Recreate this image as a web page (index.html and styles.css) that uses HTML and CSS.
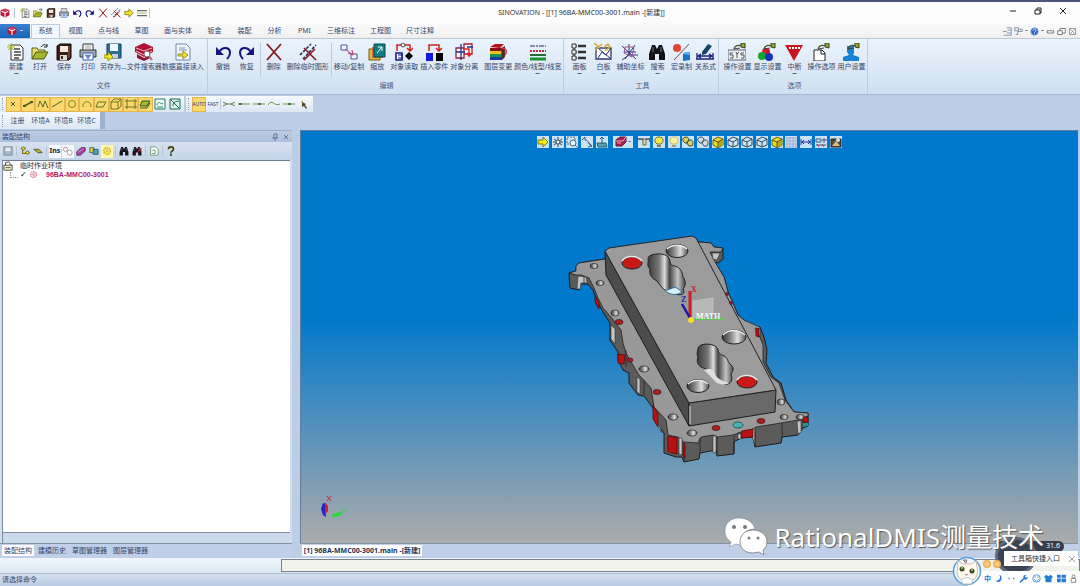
FILE: index.html
```html
<!DOCTYPE html>
<html lang="zh-CN">
<head>
    <meta charset="UTF-8">
    <meta name="viewport" content="width=device-width, initial-scale=1.0">
    <title>SINOVATION</title>
    <link rel="stylesheet" href="styles.css">
</head>
<body>
    <!-- Icon sprite -->
    <svg class="sprite" aria-hidden="true">
        <symbol id="cube" viewBox="0 0 18 18"><path d="M1 4l8-3 8 3v9l-8 4-8-4z" fill="#b51539"/><path d="M3 6l6 3 6-3M9 9v7" stroke="#fff" stroke-width="2" fill="none"/><path d="M3 4l6-2 6 2-6 3z" fill="#dc4260"/></symbol>
        <symbol id="new" viewBox="0 0 18 18"><path d="M4 2h9l3 3v12H4z" fill="#fff" stroke="#333"/><path d="M7 6h6M7 9h7M7 12h7M7 15h5" stroke="#444" stroke-width="1.3"/><path d="M4 0v8M0 4h8M1 1l6 6M7 1L1 7" stroke="#a5b82c"/></symbol>
        <symbol id="open" viewBox="0 0 18 18"><path d="M1 16V5h5l1 2h7v3" fill="#e6dc68" stroke="#5c6512"/><path d="M1 16l4-7h12l-4 7z" fill="#a5b52d" stroke="#4f5910"/><path d="M10 4c2-3 4-3 6-1m0-2v3h-3" stroke="#222" fill="none"/></symbol>
        <symbol id="save" viewBox="0 0 18 18"><path d="M2 3l3-2h11v14l-2 2H2z" fill="#3a1d13" stroke="#170a06"/><path d="M5 3h8v6H5z" fill="#f3e9df"/><path d="M5 12h7v5H5z" fill="#ddd"/><path d="M6 13h2v3H6z" fill="#3a1d13"/><path d="M14 3v12" stroke="#a6694a"/></symbol>
        <symbol id="print" viewBox="0 0 18 18"><path d="M4 7V1h10v6" fill="#fff" stroke="#333"/><path d="M1 7h16v7H1z" fill="#a8acb4" stroke="#333"/><path d="M4 10h10v7H4z" fill="#fff" stroke="#2b5fc4"/><path d="M6 12h6l-3 4zM6 3h6M6 5h6" fill="#5b91e8" stroke="#777" stroke-width=".7"/></symbol>
        <symbol id="saveas" viewBox="0 0 18 18"><path d="M3 1h14v14H3z" fill="#277294" stroke="#123f59"/><path d="M6 1h8v7H6z" fill="#f4fbff"/><path d="M8 11h6v4H8z" fill="#ccd"/><path d="M0 12h4V9l5 5-5 4v-3H0z" fill="#f2e61c" stroke="#837c0c" stroke-width=".7"/></symbol>
        <symbol id="search-file" viewBox="0 0 18 18"><path d="M0 4l9-4 9 4v5l-9 5-9-5z" fill="#b31235"/><path d="M1 5l8 3 8-3M1 8l8 4 8-4" stroke="#f6b8c3" fill="none"/><path d="M2 11l7 4 6-3v3l-6 3-7-3z" fill="#8f1230"/><circle cx="12" cy="11" r="3" fill="#fff" stroke="#666"/><path d="M14 13l3 4" stroke="#b66" stroke-width="2"/></symbol>
        <symbol id="import" viewBox="0 0 18 18"><path d="M2 1h10l4 4v12H2z" fill="#f3f6fc" stroke="#6f87ae"/><path d="M5 5h6M5 7h8" stroke="#7993bd"/><path d="M4 11h5V8l5 4-5 4v-3H4z" fill="#f2e539" stroke="#98901c"/></symbol>
        <symbol id="undo" viewBox="0 0 18 18"><path d="M2 4v8h8z" fill="#15157e"/><path d="M5 9c4-6 11-5 11 1 0 2-1 4-3 6" stroke="#15157e" stroke-width="2" fill="none"/></symbol>
        <symbol id="redo" viewBox="0 0 18 18"><path d="M16 4v8H8z" fill="#15157e"/><path d="M13 9C9 3 2 4 2 10c0 2 1 4 3 6" stroke="#15157e" stroke-width="2" fill="none"/></symbol>
        <symbol id="delete" viewBox="0 0 18 18"><path d="M2 1l14 16M16 1L2 17" stroke="#861520" stroke-width="1.8"/></symbol>
        <symbol id="delete-temp" viewBox="0 0 18 18"><path d="M1 12L12 1M4 16L17 2" stroke="#222c59" stroke-width="1.6" stroke-dasharray="3 1.5"/><path d="M5 5l12 12M16 6L5 17" stroke="#8d1822" stroke-width="1.6"/></symbol>
        <symbol id="move" viewBox="0 0 18 18"><path d="M1 2h6v5H1zM11 11h6v5h-6z" fill="#f4f6ff" stroke="#4b558e"/><path d="M5 6l8 6M8 10l5 2-1-5" stroke="#c13a67" fill="none"/></symbol>
        <symbol id="scale" viewBox="0 0 18 18"><path d="M1 6h11v11H1z" fill="#e4b93a" stroke="#795713"/><path d="M4 4h11v11H4z" fill="#d36b2f"/><path d="M6 1h11v13H6z" fill="#137d86" stroke="#064950"/><path d="M9 10l5-6m-4 0h4v4" stroke="#fff" fill="none"/></symbol>
        <symbol id="read" viewBox="0 0 18 18"><path d="M2 8V2h13v6m-3-3l3 3 3-3" stroke="#cf2020" stroke-width="1.5" fill="none"/><path d="M1 10h6v7H1z" fill="#fff" stroke="#11157a" stroke-width="1.5"/><path d="M3 12h5M3 15h5" stroke="#11157a"/><path d="M14 9l4 4-4 4-4-4z"/><circle cx="8" cy="2" r="2" fill="#f7f7f7" stroke="#444"/></symbol>
        <symbol id="insert" viewBox="0 0 18 18"><path d="M4 8V2h10v6m-3-3l3 3 3-3" stroke="#cf2020" stroke-width="1.5" fill="none"/><path d="M1 10h7v8H1z" fill="#1515e2"/><path d="M11 10h7v8h-7z"/></symbol>
        <symbol id="split" viewBox="0 0 18 18"><path d="M1 5h8v10H1zM9 1h8v10H9z" fill="#fff" stroke="#9a1f35" stroke-width="1.3"/><path d="M1 9h9M6 1v16M12 4h6" stroke="#202d91" stroke-width="1.3"/><path d="M8 6h6v6m-2-2l2 3 3-3" stroke="#d22" fill="none" stroke-width="1.5"/></symbol>
        <symbol id="layers" viewBox="0 0 18 18"><path d="M1 4l5-3h9l-4 4z" fill="#b51515"/><path d="M1 5h11v3H1z" fill="#861014"/><path d="M1 8h12v3H1z" fill="#edc320"/><path d="M1 11h12v3H1z" fill="#15934b"/><path d="M1 14h12v3H1z" fill="#1739aa"/><path d="M12 5l4-2v11l-3 3" fill="#4b2c22"/><path d="M13 5c5 0 5 4 3 7" stroke="#d33e4b" fill="none" stroke-width="1.5"/></symbol>
        <symbol id="linestyle" viewBox="0 0 18 18"><path d="M1 3h16" stroke="#28285a" stroke-dasharray="5 1 2 1"/><path d="M1 8h16" stroke="#c62842" stroke-width="2" stroke-dasharray="2 1"/><path d="M1 12h16" stroke="#276e36" stroke-width="2"/><path d="M1 16h16" stroke="#17942e" stroke-width="3"/></symbol>
        <symbol id="panel" viewBox="0 0 18 18"><path d="M4 1v15M4 3h3M4 9h3M4 15h3" stroke="#222" fill="none"/><path d="M2 1h4v4H2zM2 7h4v4H2zM2 13h4v4H2z" fill="#eee" stroke="#333"/><path d="M8 3h8M8 9h8M8 15h8" stroke="#333" stroke-width="2.5"/></symbol>
        <symbol id="board" viewBox="0 0 18 18"><path d="M2 5h15v11H2z" fill="#fff" stroke="#303670" stroke-width="1.3"/><path d="M4 15l4-6 4 3 5-7M5 6l11 9" stroke="#222c72" fill="none"/><path d="M0 0l6 5m2-4L1 7M9 5l5-4 2 3-5 4" stroke="#d7ab35" stroke-width="1.6" fill="none"/></symbol>
        <symbol id="axis" viewBox="0 0 18 18"><path d="M8 1v11h9M8 12l-7 5M1 3l14 13M3 9h12M14 2L4 16" stroke="#31347b" fill="none"/><path d="M4 4l9 0-2 10-8-4z" stroke="#a15191" fill="none"/></symbol>
        <symbol id="binoculars" viewBox="0 0 18 18"><path d="M4 2h3l2 4 2-4h3l3 9v6h-6v-6H7v6H1v-6z" fill="#121217"/><path d="M5 4v5m8-5v5" stroke="#72809a"/></symbol>
        <symbol id="macro" viewBox="0 0 18 18"><circle cx="5" cy="5" r="4" fill="#e04532"/><path d="M2 17L17 1" stroke="#82464c"/><path d="M11 11h7v6l-7 1z" fill="#1572c8"/><path d="M11 11l2-2h5v3" fill="#56b0ed"/></symbol>
        <symbol id="relation" viewBox="0 0 18 18"><path d="M1 16V10m16 6v-6M0 16h18M2 13h14m-11-2l-3 2 3 2m8-4l3 2-3 2" stroke="#18207b" fill="none" stroke-width="1.3"/><path d="M6 9l6-8 4 2-6 8-4 1z" fill="#174669"/></symbol>
        <symbol id="hand" viewBox="0 0 18 18"><path d="M6 6c1-4 4-4 9-3" fill="none" stroke="#4b4e28" stroke-width="1.3"/><path d="M13 0h4v5l-4-1z" fill="#96a53a" stroke="#38401f"/><path d="M6 6l6-1" stroke="#444"/></symbol>
        <symbol id="sys" viewBox="0 0 18 18"><path d="M0 7h18v10H0z" fill="#edf0f7" stroke="#59617a"/><path d="M5 10H2v2h3v3H2M8 9l1 2 2-2m-2 2v4m7-5h-3v2h3v3h-3" stroke="#555" fill="none"/><use href="#hand"/></symbol>
        <symbol id="rgb" viewBox="0 0 18 18"><circle cx="8" cy="9" r="4" fill="#db1623"/><circle cx="4" cy="13" r="4" fill="#16a52e"/><circle cx="11" cy="14" r="4" fill="#1631c5"/><use href="#hand"/></symbol>
        <symbol id="stop" viewBox="0 0 18 18"><path d="M0 2h18L9 18z" fill="#c7141e"/><path d="M4 5h2m1 0h2m1 0h2m1 0h2" stroke="#fff" stroke-width="2"/></symbol>
        <symbol id="page" viewBox="0 0 18 18"><path d="M2 7h8l3 3v8H2z" fill="#fff" stroke="#222"/><path d="M9 7v4h4" fill="none" stroke="#222"/><use href="#hand"/></symbol>
        <symbol id="user" viewBox="0 0 18 18"><path d="M5 3h7v7l-1 2 6 2v4H1v-4l6-2-2-3z" fill="#1883d4"/><use href="#hand"/></symbol>
        <symbol id="arrow" viewBox="0 0 12 12"><path d="M1 4h5V1l5 5-5 5V8H1z" fill="#f3e819" stroke="#837b15"/></symbol>
        <symbol id="lines" viewBox="0 0 12 12"><path d="M0 3h12M0 9h12" stroke="#687066" stroke-width="1.5"/><path d="M0 6h12" stroke="#9cac57"/></symbol>

        <symbol id="s-point" viewBox="0 0 12 12"><path d="M4 4l4 4m0-4L4 8" stroke="#5c501c"/></symbol>
        <symbol id="s-end" viewBox="0 0 12 12"><path d="M2 8l8-4" stroke="#465d1b" stroke-width="1.5"/><path d="M1 7h3v2H1zM8 3h3v2H8z" fill="#465d1b"/></symbol>
        <symbol id="s-poly" viewBox="0 0 12 12"><path d="M1 9l2-6 3 6 2-6 3 7" fill="none" stroke="#58692b"/></symbol>
        <symbol id="s-line" viewBox="0 0 12 12"><path d="M1 9l10-6" stroke="#486122"/></symbol>
        <symbol id="s-circle" viewBox="0 0 12 12"><circle cx="6" cy="6" r="3.5" fill="none" stroke="#818226"/></symbol>
        <symbol id="s-arc" viewBox="0 0 12 12"><path d="M2 9C1 2 11 2 10 9" fill="none" stroke="#847d2a"/></symbol>
        <symbol id="s-plane" viewBox="0 0 12 12"><path d="M3 4h8L8 9H1z" fill="none" stroke="#5e772c"/></symbol>
        <symbol id="s-box" viewBox="0 0 12 12"><path d="M1 4h7v7H1zM1 4l3-3h7v7l-3 3m0-7l3-3" fill="none" stroke="#6b7527"/></symbol>
        <symbol id="s-frame" viewBox="0 0 12 12"><path d="M2 1v10m8-10v10M0 3h12M0 9h12" fill="none" stroke="#6f7029"/></symbol>
        <symbol id="s-solid" viewBox="0 0 12 12"><path d="M3 3h8L8 8H1z" fill="#9cba32" stroke="#375a1f"/><path d="M1 10h7l3-5" fill="none" stroke="#375a1f"/></symbol>
        <symbol id="s-wave" viewBox="0 0 12 12"><path d="M1 1h10v10H1z" fill="#eefbf6" stroke="#1c7960"/><path d="M3 7c2-6 4 1 6-2M3 9h6" stroke="#238367" fill="none"/></symbol>
        <symbol id="s-cross" viewBox="0 0 12 12"><path d="M1 1h10v10H1z" fill="#ddf2e9" stroke="#1c6552"/><path d="M2 2l8 8M4 8c0-5 3-4 6-5" stroke="#1c6552" fill="none"/></symbol>
        <symbol id="s-trim" viewBox="0 0 12 12"><path d="M0 4l4 2-4 2M12 4L8 6l4 2M3 6h6" stroke="#66794b" fill="none"/></symbol>
        <symbol id="s-seg" viewBox="0 0 12 12"><path d="M0 6h12" stroke="#6e9c42"/><path d="M1 5h3v2H1z" fill="#576f44"/></symbol>
        <symbol id="s-mid" viewBox="0 0 12 12"><path d="M0 6h12" stroke="#6e9c42"/><path d="M5 5h3v2H5z" fill="#576f44"/></symbol>
        <symbol id="s-curve" viewBox="0 0 12 12"><path d="M0 7c4-7 6 2 12-1" stroke="#6e8e4e" fill="none"/></symbol>
        <symbol id="s-pick" viewBox="0 0 12 12"><path d="M4 4l4 2-1 1 2 3-1 1-2-3-2 1z" fill="#53471f"/><path d="M3 4l2-1" stroke="#b7ad3b"/></symbol>

        <symbol id="p-save" viewBox="0 0 12 12"><path d="M1 1h10v10H1z" fill="#aeb7c6" stroke="#76839a"/><path d="M3 2h6v4H3z" fill="#e7ebf2"/></symbol>
        <symbol id="p-tree" viewBox="0 0 12 12"><path d="M1 3l3-2 3 2-3 2zM6 8l3-2 3 2-3 2zM3 5v4h4" fill="#edd822" stroke="#5b5418"/></symbol>
        <symbol id="p-minus" viewBox="0 0 12 12"><path d="M1 4h6l4 4H6z" fill="#c0b932" stroke="#4b4e25"/></symbol>
        <symbol id="p-parts" viewBox="0 0 12 12"><circle cx="3" cy="4" r="2.5" fill="#fff" stroke="#a48e91"/><circle cx="8" cy="8" r="3" fill="#fff" stroke="#a48e91"/></symbol>
        <symbol id="p-brick" viewBox="0 0 12 12"><path d="M1 7l5-5h5v4l-6 5H1z" fill="#a646a1" stroke="#562469"/><path d="M2 8l7-5" stroke="#e09ad9"/></symbol>
        <symbol id="p-copy" viewBox="0 0 12 12"><path d="M1 2h5v6H1z" fill="#e5d734" stroke="#356"/><path d="M5 4h6v6H5z" fill="#49a3ad" stroke="#245562"/></symbol>
        <symbol id="p-gear" viewBox="0 0 12 12"><circle cx="6" cy="6" r="4" fill="none" stroke="currentColor" stroke-width="2" stroke-dasharray="2 1"/><path d="M6 2v8M2 6h8M3 3l6 6M9 3L3 9" stroke="currentColor" fill="none" stroke-width=".7"/></symbol>
        <symbol id="p-refresh" viewBox="0 0 12 12"><path d="M2 1h6l3 3v7H2z" fill="#f7fff8" stroke="#65886b"/><path d="M4 6c2-3 5 0 3 3H4" stroke="#278943" fill="none"/></symbol>
        <symbol id="p-help" viewBox="0 0 12 12"><path d="M3 4c0-4 6-4 6 0 0 2-3 2-3 4m0 1v3" stroke="#3c3f1b" stroke-width="2" fill="none"/><path d="M4 4c0-2 4-2 4 0" stroke="#bbbd31" fill="none"/></symbol>
        <symbol id="p-next" viewBox="0 0 18 18"><use href="#binoculars"/><path d="M8 13l8-8m-5 0h5v5" stroke="#9c2338" stroke-width="2" fill="none"/></symbol>

        <symbol id="v-rotate" viewBox="0 0 12 12"><path d="M6 1v10M1 6h10M2 3l8 6M10 3L2 9" stroke="#33465a" fill="none"/><circle cx="6" cy="6" r="2" fill="#fff" stroke="#35495c"/></symbol>
        <symbol id="v-zoom" viewBox="0 0 12 12"><path d="M1 1h8v7H1z" fill="none" stroke="#536e86" stroke-dasharray="2 1"/><circle cx="7" cy="7" r="3" fill="#e6f5ff" stroke="#486a85"/><path d="M9 9l3 3" stroke="#486a85"/></symbol>
        <symbol id="v-turn" viewBox="0 0 12 12"><path d="M1 4l3-3v3c4 0 3 5 7 6M7 6l4 4-4 1" stroke="#34546d" fill="none"/></symbol>
        <symbol id="v-normal" viewBox="0 0 12 12"><path d="M1 7h9l1 4H2z" fill="#53a6b1" stroke="#265e70"/><path d="M6 1v7M4 3l2-2 2 2" stroke="#265e70" fill="none"/></symbol>
        <symbol id="v-section" viewBox="0 0 12 12"><path d="M1 4l4-3h6v5l-4 4H1z" fill="#a9234f" stroke="#5f173a"/><path d="M1 5h7l3-4M2 7h4" stroke="#ecacc1" fill="none"/></symbol>
        <symbol id="v-hide" viewBox="0 0 12 12"><path d="M0 3h4l2 2M8 3h4v3" stroke="#494b55" stroke-width="1.5" fill="none"/><path d="M5 3h3v6H5z" fill="#e5ddb4" stroke="#66613a"/></symbol>
        <symbol id="v-bulb" viewBox="0 0 12 12"><path d="M4 8C1 6 1 1 6 1s5 5 2 7z" fill="#f7e84e" stroke="#756d22"/><path d="M4 9h4v2H4z" fill="#847f59"/></symbol>
        <symbol id="v-dim" viewBox="0 0 12 12"><path d="M4 8C1 6 1 1 6 1s5 5 2 7z" fill="#f9f1a3" stroke="#c9bd62"/><path d="M4 9h4v2H4z" fill="#a3a082"/></symbol>
        <symbol id="v-pair" viewBox="0 0 12 12"><path d="M3 7C-1 4 1 1 4 1s4 3 1 6zM7 10C4 7 5 4 8 4s4 3 2 6z" fill="#d8cf64" stroke="#414b38"/></symbol>
        <symbol id="v-pair2" viewBox="0 0 12 12"><path d="M3 7C-1 4 1 1 4 1s4 3 1 6zM7 10C4 7 5 4 8 4s4 3 2 6z" fill="#d5dde4" stroke="#40505d"/></symbol>
        <symbol id="v-shade" viewBox="0 0 12 12"><path d="M1 4l5-3 5 2v6l-5 3-5-3z" fill="#edda24" stroke="#6b641b"/><path d="M6 6l5-3v6l-5 3z" fill="#b5a816"/><path d="M1 4l5 2v6m0-6l5-3" stroke="#5b5518" fill="none"/></symbol>
        <symbol id="v-wire" viewBox="0 0 12 12"><path d="M1 4l5-3 5 2v6l-5 2-5-2zM1 4l5 2v5m0-5l5-3" stroke="#334b5d" fill="none"/></symbol>
        <symbol id="v-grid" viewBox="0 0 12 12"><path d="M1 2h10M1 5h10M1 8h10M1 11h10M2 1v10M5 1v10M8 1v10M11 1v10" stroke="#9992bd" stroke-width=".7"/></symbol>
        <symbol id="v-measure" viewBox="0 0 12 12"><path d="M1 3v6m10-6v6M1 6h10M4 4L2 6l2 2m4-4l2 2-2 2" stroke="#273098" fill="none"/></symbol>
        <symbol id="v-tag" viewBox="0 0 12 12"><path d="M1 3h5v3H1zM1 9h10M9 2v5M7 4h5" stroke="#4b527f" fill="none"/><path d="M2 8l2 3m3-3l2 3" stroke="#b93b53"/></symbol>
        <symbol id="v-photo" viewBox="0 0 12 12"><path d="M1 3h10v8H1z" fill="#564b40" stroke="#252424"/><path d="M2 10l4-5 4 5z" fill="#dfbf7e"/><circle cx="8" cy="4" r="2" fill="#ddd"/></symbol>
    </svg>

    <!-- Title bar -->
    <header class="title-bar">
        <div class="quick-access">
            <svg class="icon-small"><use href="#cube"/></svg>
            <span class="divider"></span>
            <button aria-label="新建"><svg class="icon-small"><use href="#new"/></svg></button>
            <button aria-label="打开"><svg class="icon-small"><use href="#open"/></svg></button>
            <button aria-label="保存"><svg class="icon-small"><use href="#save"/></svg></button>
            <button aria-label="打印"><svg class="icon-small"><use href="#print"/></svg></button>
            <button aria-label="撤销"><svg class="icon-small"><use href="#undo"/></svg></button>
            <button aria-label="恢复"><svg class="icon-small"><use href="#redo"/></svg></button>
            <button aria-label="删除"><svg class="icon-small"><use href="#delete"/></svg></button>
            <button aria-label="删除临时图形"><svg class="icon-small"><use href="#delete-temp"/></svg></button>
            <button aria-label="执行"><svg class="icon-small"><use href="#arrow"/></svg></button>
            <button aria-label="线型"><svg class="icon-small"><use href="#lines"/></svg></button>
            <span class="divider"></span>
        </div>
        <h1>SINOVATION - [[1] 96BA-MMC00-3001.main -[新建]]</h1>
        <div class="window-buttons">
            <button aria-label="最小化"><svg class="icon-win" viewBox="0 0 8 8"><path d="M1 4h6" stroke="#222"/></svg></button>
            <button aria-label="还原"><svg class="icon-win" viewBox="0 0 8 8"><path d="M1 3h5v4H1zM3 3V1h4v5H6" fill="none" stroke="#222"/></svg></button>
            <button aria-label="关闭"><svg class="icon-win" viewBox="0 0 8 8"><path d="M1 1l6 6M7 1L1 7" stroke="#222"/></svg></button>
        </div>
    </header>

    <!-- Ribbon tabs -->
    <nav class="ribbon-tabs">
        <button class="app-button" aria-label="应用菜单"><svg class="icon-small"><use href="#cube"/></svg><span class="caret light"></span></button>
        <a class="tab active" href="#">系统</a>
        <a class="tab" href="#">视图</a>
        <a class="tab" href="#">点与线</a>
        <a class="tab" href="#">草图</a>
        <a class="tab" href="#">面与实体</a>
        <a class="tab" href="#">钣金</a>
        <a class="tab" href="#">装配</a>
        <a class="tab" href="#">分析</a>
        <a class="tab" href="#">PMI</a>
        <a class="tab" href="#">三维标注</a>
        <a class="tab" href="#">工程图</a>
        <a class="tab" href="#">尺寸注释</a>
        <div class="tab-tools">
            <button aria-label="对齐"><svg class="icon-tab" viewBox="0 0 12 12"><path d="M0 6h5M5 1h6v3H6m5 0v4H5m6 0v3H1" fill="none" stroke="#6485a5"/></svg></button>
            <button aria-label="窗口"><svg class="icon-tab" viewBox="0 0 12 12"><path d="M1 1h5v4H1zM7 3h4v3H5v4H2" fill="none" stroke="#667583"/></svg><span class="caret"></span></button>
            <button aria-label="帮助"><svg class="icon-tab" viewBox="0 0 12 12"><circle cx="6" cy="6" r="5" fill="#2c65c5" stroke="#8db1e6"/><path d="M4 5c0-3 4-3 4 0L6 7v2" stroke="#fff" fill="none"/></svg><span class="caret"></span></button>
            <button aria-label="最小化文档"><svg class="icon-tab" viewBox="0 0 12 12"><path d="M2 5h8v3H2z" fill="#fff" stroke="#555"/></svg></button>
            <button aria-label="还原文档"><svg class="icon-tab" viewBox="0 0 12 12"><path d="M1 5h6v5H1zM4 5V2h7v6H7" fill="#fff" stroke="#555"/></svg></button>
            <button aria-label="关闭文档"><svg class="icon-tab" viewBox="0 0 12 12"><path d="M2 2h8v8H2zM3 3l6 6m0-6L3 9" fill="#fff" stroke="#777"/></svg></button>
        </div>
    </nav>

    <!-- Ribbon -->
    <section class="ribbon">
        <div class="ribbon-group file-group">
            <div class="ribbon-items">
                <button class="tool drop"><svg><use href="#new"/></svg>新建</button>
                <button class="tool"><svg><use href="#open"/></svg>打开</button>
                <button class="tool"><svg><use href="#save"/></svg>保存</button>
                <button class="tool"><svg><use href="#print"/></svg>打印</button>
                <button class="tool"><svg><use href="#saveas"/></svg>另存为...</button>
                <button class="tool"><svg><use href="#search-file"/></svg>文件搜索器</button>
                <button class="tool"><svg><use href="#import"/></svg>数据直接读入</button>
            </div>
            <h2>文件</h2>
        </div>
        <div class="ribbon-group">
            <div class="ribbon-items">
                <button class="tool"><svg><use href="#undo"/></svg>撤销</button>
                <button class="tool"><svg><use href="#redo"/></svg>恢复</button>
                <span class="ribbon-line"></span>
                <button class="tool"><svg><use href="#delete"/></svg>删除</button>
                <button class="tool"><svg><use href="#delete-temp"/></svg>删除临时图形</button>
                <span class="ribbon-line"></span>
                <button class="tool"><svg><use href="#move"/></svg>移动/复制</button>
                <button class="tool"><svg><use href="#scale"/></svg>缩放</button>
                <button class="tool"><svg><use href="#read"/></svg>对象读取</button>
                <button class="tool"><svg><use href="#insert"/></svg>插入零件</button>
                <button class="tool"><svg><use href="#split"/></svg>对象分离</button>
                <span class="ribbon-gap"></span>
                <button class="tool"><svg><use href="#layers"/></svg>图层变更</button>
                <button class="tool drop"><svg><use href="#linestyle"/></svg>颜色/线型/线宽</button>
            </div>
            <h2>编辑</h2>
        </div>
        <div class="ribbon-group">
            <div class="ribbon-items">
                <button class="tool drop"><svg><use href="#panel"/></svg>面板</button>
                <button class="tool drop"><svg><use href="#board"/></svg>白板</button>
                <button class="tool"><svg><use href="#axis"/></svg>辅助坐标</button>
                <button class="tool drop"><svg><use href="#binoculars"/></svg>搜索</button>
                <button class="tool"><svg><use href="#macro"/></svg>宏录制</button>
                <button class="tool"><svg><use href="#relation"/></svg>关系式</button>
            </div>
            <h2>工具</h2>
        </div>
        <div class="ribbon-group">
            <div class="ribbon-items">
                <button class="tool drop"><svg><use href="#sys"/></svg>操作设置</button>
                <button class="tool drop"><svg><use href="#rgb"/></svg>显示设置</button>
                <button class="tool drop"><svg><use href="#stop"/></svg>中断</button>
                <button class="tool"><svg><use href="#page"/></svg>操作选项</button>
                <button class="tool"><svg><use href="#user"/></svg>用户设置</button>
            </div>
            <h2>选项</h2>
        </div>
    </section>

    <!-- Selection toolbars -->
    <section class="toolbars">
        <div class="toolbar-row">
            <div class="toolbar">
                <span class="grip"></span>
                <div class="snap-buttons">
                    <button class="on" aria-label="点"><svg><use href="#s-point"/></svg></button>
                    <button class="on" aria-label="端点"><svg><use href="#s-end"/></svg></button>
                    <button class="on" aria-label="曲线"><svg><use href="#s-poly"/></svg></button>
                    <button class="on" aria-label="直线"><svg><use href="#s-line"/></svg></button>
                    <button class="on" aria-label="圆"><svg><use href="#s-circle"/></svg></button>
                    <button class="on" aria-label="圆弧"><svg><use href="#s-arc"/></svg></button>
                    <button class="on" aria-label="平面"><svg><use href="#s-plane"/></svg></button>
                    <button class="on" aria-label="实体"><svg><use href="#s-box"/></svg></button>
                    <button class="on" aria-label="尺寸"><svg><use href="#s-frame"/></svg></button>
                    <button class="on" aria-label="面"><svg><use href="#s-solid"/></svg></button>
                    <button aria-label="全部选择"><svg><use href="#s-wave"/></svg></button>
                    <button aria-label="全部取消"><svg><use href="#s-cross"/></svg></button>
                </div>
            </div>
            <div class="toolbar">
                <span class="grip"></span>
                <button class="mode on">AUTO</button>
                <button class="mode">FAST</button>
                <span class="divider"></span>
                <div class="curve-buttons">
                    <button aria-label="交点"><svg><use href="#s-trim"/></svg></button>
                    <button aria-label="起点"><svg><use href="#s-seg"/></svg></button>
                    <button aria-label="中点"><svg><use href="#s-mid"/></svg></button>
                    <button aria-label="曲线上点"><svg><use href="#s-curve"/></svg></button>
                    <button aria-label="线上点"><svg><use href="#s-mid"/></svg></button>
                    <button aria-label="拾取"><svg><use href="#s-pick"/></svg></button>
                </div>
            </div>
        </div>
        <div class="toolbar-row">
            <div class="toolbar env">
                <span class="grip"></span>
                <button>注册</button>
                <button>环境A</button>
                <button>环境B</button>
                <button>环境C</button>
                <span class="env-end"></span>
            </div>
        </div>
    </section>

    <!-- Work area -->
    <main class="workspace">
        <aside class="side-panel">
            <div class="panel-header">
                <h2>装配结构</h2>
                <svg class="icon-win" viewBox="0 0 8 8"><path d="M3 1h3v4H3zM1 5h6M4 5v3" fill="none" stroke="#667b9a"/></svg>
                <svg class="icon-win" viewBox="0 0 8 8"><path d="M2 2l4 4m0-4L2 6" stroke="#667b9a"/></svg>
            </div>
            <div class="panel-tools">
                <button aria-label="保存"><svg><use href="#p-save"/></svg></button>
                <span class="divider"></span>
                <button aria-label="展开"><svg><use href="#p-tree"/></svg></button>
                <button aria-label="折叠"><svg><use href="#p-minus"/></svg></button>
                <span class="divider"></span>
                <button class="pressed">Ins</button>
                <button class="pressed" aria-label="零件"><svg><use href="#p-parts"/></svg></button>
                <button aria-label="实体"><svg><use href="#p-brick"/></svg></button>
                <button aria-label="复制"><svg><use href="#p-copy"/></svg></button>
                <button class="pressed yellow" aria-label="约束"><svg><use href="#p-gear"/></svg></button>
                <span class="divider"></span>
                <button aria-label="查找"><svg><use href="#binoculars"/></svg></button>
                <button aria-label="查找下一个"><svg><use href="#p-next"/></svg></button>
                <span class="divider"></span>
                <button aria-label="刷新"><svg><use href="#p-refresh"/></svg></button>
                <span class="divider"></span>
                <button aria-label="帮助"><svg><use href="#p-help"/></svg></button>
            </div>
            <div class="tree">
                <div class="tree-row">
                    <svg class="tree-root" viewBox="0 0 12 12"><path d="M1 5h10v6H1z" fill="#f7f3c5" stroke="#333"/><path d="M3 5V2l4-1 3 4M3 8h6" fill="none" stroke="#333"/></svg>
                    <span>临时作业环境</span>
                </div>
                <div class="tree-row child">
                    <span class="branch"></span>
                    <input type="checkbox" id="part" checked>
                    <svg class="gear"><use href="#p-gear"/></svg>
                    <label for="part">96BA-MMC00-3001</label>
                </div>
            </div>
            <div class="tree-scroll"></div>
            <nav class="panel-tabs">
                <a class="active" href="#">装配结构</a>
                <a href="#">建模历史</a>
                <a href="#">草图管理器</a>
                <a href="#">图层管理器</a>
            </nav>
        </aside>

        <section class="document">
            <div class="viewport">
                <div class="view-tools">
                    <div class="view-group nav-group">
                        <button aria-label="执行"><svg><use href="#arrow"/></svg></button>
                        <button aria-label="旋转"><svg><use href="#v-rotate"/></svg></button>
                        <button aria-label="缩放"><svg><use href="#v-zoom"/></svg></button>
                        <button aria-label="翻转"><svg><use href="#v-turn"/></svg></button>
                        <button aria-label="正视"><svg><use href="#v-normal"/></svg></button>
                    </div>
                    <button class="section-button" aria-label="剖面"><svg><use href="#v-section"/></svg><span class="caret"></span></button>
                    <div class="view-group display-group">
                        <button aria-label="隐藏"><svg><use href="#v-hide"/></svg></button>
                        <button aria-label="显示"><svg><use href="#v-bulb"/></svg></button>
                        <button aria-label="全部显示"><svg><use href="#v-dim"/></svg></button>
                        <button aria-label="反转显示"><svg><use href="#v-pair"/></svg></button>
                        <button aria-label="显示切换"><svg><use href="#v-pair2"/></svg></button>
                        <button aria-label="着色"><svg><use href="#v-shade"/></svg></button>
                        <button aria-label="线框"><svg><use href="#v-wire"/></svg></button>
                        <button aria-label="隐藏线"><svg><use href="#v-wire"/></svg></button>
                        <button aria-label="虚线"><svg><use href="#v-wire"/></svg></button>
                        <button aria-label="着色线框"><svg><use href="#v-shade"/></svg></button>
                        <button aria-label="网格"><svg><use href="#v-grid"/></svg></button>
                        <button aria-label="尺寸"><svg><use href="#v-measure"/></svg></button>
                        <button aria-label="标注"><svg><use href="#v-tag"/></svg></button>
                        <button aria-label="渲染"><svg><use href="#v-photo"/></svg></button>
                    </div>
                </div>

                <div class="scene">
                    <svg class="model" viewBox="560 226 256 240" role="img" aria-label="96BA-MMC00-3001">
                        <defs>
                            <linearGradient id="bore"><stop offset="0" stop-color="#333"/><stop offset=".35" stop-color="#858585"/><stop offset=".65" stop-color="#ddd"/><stop offset="1" stop-color="#555"/></linearGradient>
                            <linearGradient id="slot"><stop offset="0" stop-color="#3a3a3a"/><stop offset=".3" stop-color="#777"/><stop offset=".45" stop-color="#ddd"/><stop offset=".58" stop-color="#454545"/><stop offset=".8" stop-color="#c4c4c4"/><stop offset="1" stop-color="#4a4a4a"/></linearGradient>
                        </defs>
                        <!-- Base plate walls -->
                        <path d="M568 273L575 271 575 266 578 263 604 259 698 242 710 243 713 247 722 248 722 259 717 263 712 262 717 267 723 277 727 292 732 303 737 315 743 320 752 326 759 327 763 337 766 350 765 363 772 377 780 383 785 400 793 412 807 413 807 426 802 428 797 435 781 437 780 443 754 447 752 437 740 438 733 442 733 454 716 456 715 450 699 453 698 459 683 462 681 457 675 457 663 453 663 433 655 423 652 408 643 396 637 395 628 383 628 373 622 370 617 360 617 352 609 340 609 323 602 312 597 303 592 290 587 284 579 284 578 290 569 288z" fill="#5b5b5b" stroke="#1b1b1b"/>
                        <!-- Base plate top -->
                        <path d="M568 273L575 271 575 266 578 263 604 259 698 242 710 243 713 247 722 248 720 252 709 252 712 258 717 267 723 277 727 292 732 303 737 315 743 320 752 324 759 327 758 335 762 345 762 362 770 377 778 383 784 400 793 412 807 413 807 416 797 420 780 423 755 427 752 429 740 432 732 435 717 437 712 435 700 437 697 443 683 442 677 437 667 435 665 420 653 407 650 388 638 375 630 362 625 353 622 343 620 330 610 317 602 308 597 298 593 288 588 278 580 275 575 275z" fill="#999" stroke="#202020" stroke-width=".8"/>
                        <!-- Side wall highlights -->
                        <path d="M577 276l8 1 1 6h-6l-1 6h-3zM610 325l4 4v15l-4-5zM636 377l3 2v15l-3-2zM667 436h3v18l-3-1zM678 438h3v17l-3-1zM712 436h3v16l-3 1zM737 434h3v5h-3zM750 430l4-2v18l-2-7zM796 421h4v11l-3 2zM711 253h8l-3 7-4-1zM754 328l5 1v7l-4-3zM656 425l5 8-3-8z" fill="#c4c4c4" stroke="#333" stroke-width=".6"/>
                        <path d="M583 276v8M625 350v17M643 380v15M699 438v15M716 437v18M733 435v18M754 429v18M781 423v15M802 418v10M683 443v18" stroke="#252525" stroke-width=".8"/>
                        <!-- Marked faces -->
                        <path d="M652 405l5 9v13l-5-8zM667 436l9 2v16l-9-2zM741 431l11-2v8l-12 1zM617 354l7 1-1 9-6-1zM594 296l4 6v7l-4-7zM682 443l2 1v14l-2-3zM802 417h5v6l-5-1zM755 328l3 1v8l-3-1z" fill="#b81212" stroke="#4d0808" stroke-width=".7"/>
                        <path d="M802 423h5v3l-5 1z" fill="#169b94"/>
                        <!-- Raised block -->
                        <path d="M604 251l84 152v23l-83-151z" fill="#4c4c4c" stroke="#1c1c1c"/>
                        <path d="M688 403l87-13-1 22-86 14z" fill="#696969" stroke="#1c1c1c"/>
                        <path d="M604 251l4-3 83-12 4 2 80 152-87 13z" fill="#9b9b9b" stroke="#242424"/>
                        <path d="M689 406v18" stroke="#ddd"/>
                        <!-- Slots -->
                        <path d="M647 258c1-5 18-6 21 0 2 6 1 7 6 8 6 2 7 6 8 11 3 4 3 8 0 12 3 5-2 7-8 5-9-1-14-7-18-13-6-3-8-7-7-12-4-4-1-7-2-11z" fill="url(#slot)" stroke="#222"/>
                        <path d="M664 290c4 1 8-4 12-2l5 4c-5 4-14 3-17-2z" fill="#d9eef5" stroke="#28709a"/>
                        <path d="M697 348c2-6 19-5 20 2 1 5 3 4 6 6 4 2 3 5 6 8 5 4 3 7 1 10 3 7-2 12-8 10-7-1-11-8-17-15-8-2-10-7-8-12-2-4 0-6 0-9z" fill="url(#slot)" stroke="#222"/>
                        <path d="M703 370c8-2 9-1 12 6 3 4 8 5 13 7-7 4-13 0-17-5z" fill="#ddd"/>
                        <!-- Large bores -->
                        <g fill="url(#bore)" stroke="#222"><ellipse cx="676" cy="251" rx="11" ry="6.500"/><ellipse cx="733" cy="337" rx="12" ry="7"/><ellipse cx="697" cy="386" rx="11" ry="6.500"/></g>
                        <g fill="#c91818" stroke="#222"><ellipse cx="631" cy="263" rx="10" ry="6"/><ellipse cx="746" cy="382" rx="10" ry="6"/></g>
                        <path d="M621 261c4-6 15-6 20 0M736 380c4-6 15-6 20 0M666 249c5-5 15-5 20 0M722 335c5-6 16-6 22 0M687 384c5-5 15-5 20 0" stroke="#e8e8e8" stroke-width="1.500" fill="none"/>
                        <!-- Small bores -->
                        <g fill="url(#bore)" stroke="#222" stroke-width=".7"><ellipse cx="593" cy="266" rx="4" ry="2.500"/><ellipse cx="599" cy="283" rx="4" ry="2.500"/><ellipse cx="614" cy="313" rx="4" ry="3"/><ellipse cx="643" cy="369" rx="5" ry="3"/><ellipse cx="672" cy="417" rx="5" ry="3"/><ellipse cx="691" cy="433" rx="5" ry="3"/><ellipse cx="780" cy="402" rx="4" ry="3"/><ellipse cx="783" cy="417" rx="4" ry="2.500"/><ellipse cx="799" cy="417" rx="4" ry="2.500"/></g>
                        <g fill="#b91a20" stroke="#262020" stroke-width=".7"><ellipse cx="618" cy="322" rx="4" ry="2.500"/><ellipse cx="656" cy="392" rx="4" ry="2.500"/><ellipse cx="715" cy="428" rx="4" ry="2.500"/><ellipse cx="760" cy="421" rx="4" ry="2.500"/><ellipse cx="629" cy="360" rx="3" ry="2"/><circle cx="726" cy="294" r="1.500"/><circle cx="730" cy="303" r="1.500"/></g>
                        <ellipse cx="737" cy="425" rx="5" ry="3" fill="#47b6b2" stroke="#205956"/>
                        <!-- Work axes -->
                        <path d="M692 301l20-3v17l-20 3z" fill="#b7b7b7" stroke="#c7c7c7" stroke-width=".7"/>
                        <path d="M689 319v-28" stroke="#cf1d24" stroke-width="3"/><path d="M689 318l-8-14" stroke="#1717a9" stroke-width="2.500"/>
                        <circle cx="690" cy="320" r="3" fill="#f0df25"/>
                        <path d="M694 319h28" stroke="#42d83c" stroke-width="1.500" stroke-dasharray="4 1"/>
                        <g class="axis-text"><text x="690" y="292" fill="#c6242d">X</text><text x="680" y="302" fill="#2525af">Z</text><text x="695" y="319" fill="#eefff0">MATH</text></g>
                    </svg>
                </div>
                <svg class="triad" viewBox="0 0 30 26" aria-hidden="true"><path d="M3 8l-2 6 2 6 3 2V9z" fill="#2224c9"/><path d="M5 7l3 4v5l-3 4z" fill="#df1830"/><path d="M12 20l9-3v3l-8 2zM22 17l5-3" fill="#29d83d" stroke="#29d83d"/><path d="M7 1l4 5m0-5L7 6" stroke="#c72e42"/></svg>
            </div>
            <div class="document-tabs"><a href="#">[1] 96BA-MMC00-3001.main -[新建]</a></div>
        </section>
    </main>

    <div class="command-row"><input type="text" aria-label="命令"></div>
    <footer class="status-bar">请选择命令</footer>

    <!-- Desktop widgets -->
    <div class="speed-widget"><span>31.6</span></div>
    <div class="watermark">
        <svg viewBox="0 0 44 40" aria-hidden="true"><path d="M15 1C7 1 1 6 1 14c0 5 2 8 6 11l-2 5 7-3c3 1 6 1 8 0-4-9 2-15 11-15C29 5 23 1 15 1z" fill="#fff" stroke="#777" stroke-width=".5"/><path d="M29 13c-8 0-13 5-13 12s6 11 13 11l6-1 5 3-1-5c3-2 4-5 4-8 0-7-6-12-14-12z" fill="#fff" stroke="#777" stroke-width=".8"/><g fill="#747b82"><circle cx="10" cy="10" r="2"/><circle cx="21" cy="10" r="2"/><circle cx="25" cy="21" r="1.500"/><circle cx="34" cy="21" r="1.500"/></g></svg>
        <span>RationalDMIS测量技术</span>
    </div>
    <div class="ime">
        <div class="ime-tip"><span>工具箱快捷入口</span><button aria-label="关闭提示"><svg class="icon-win" viewBox="0 0 8 8"><path d="M1 1l6 6M7 1L1 7" stroke="#999"/></svg></button></div>
        <div class="ime-emotes"><span></span><span></span></div>
        <div class="ime-bar">
            <button>中</button>
            <button aria-label="半角"><svg viewBox="0 0 12 12"><path d="M7 1c3 5-1 9-5 8 4 4 9 0 8-4 0-2-1-3-3-4z" fill="#277bd1"/></svg></button>
            <button aria-label="标点"><svg viewBox="0 0 12 12"><path d="M2 6h2m4 0h2" stroke="#55a0e3" stroke-width="2"/></svg></button>
            <button aria-label="工具"><svg viewBox="0 0 12 12"><path d="M1 10l5-5c-1-3 1-4 4-4L8 3l1 2 3-1c-1 4-3 4-5 3l-5 5z" fill="#277bd1"/></svg></button>
            <button aria-label="表情"><svg viewBox="0 0 12 12"><circle cx="6" cy="6" r="5" fill="none" stroke="#277bd1"/><path d="M3 7c1 3 5 3 6 0M4 3v2m4-2v2" fill="none" stroke="#277bd1"/></svg></button>
            <button aria-label="皮肤"><svg viewBox="0 0 12 12"><path d="M3 1l3 2 3-2 3 3-2 2v5H2V6L0 4z" fill="#277bd1"/></svg></button>
            <button aria-label="工具箱"><svg viewBox="0 0 12 12"><path d="M0 1h5v4H0zM6 1h6v4H6zM0 6h5v5H0zM6 6h6v5H6z" fill="#277bd1"/></svg></button>
            <button aria-label="用户"><svg viewBox="0 0 12 12"><circle cx="6" cy="3" r="2" fill="none" stroke="#667"/><path d="M3 11V6h6v5z" fill="none" stroke="#667"/></svg></button>
        </div>
        <svg class="mascot" viewBox="0 0 30 30" aria-hidden="true"><circle cx="15" cy="15" r="13.500" fill="#eefaff" stroke="#5a9fd9" stroke-width="1.500"/><path d="M6 10l-1-5 6 3h8l5-3 1 6c2 9-2 14-10 14S3 19 6 10z" fill="#fff8ed" stroke="#ccc0b1"/><circle cx="10" cy="13" r="2.500" fill="#394a2b"/><circle cx="20" cy="15" r="2.500" fill="#394a2b"/><circle cx="10" cy="12" r="1" fill="#b6dc54"/><circle cx="20" cy="14" r="1" fill="#b6dc54"/><path d="M13 18c1 2 2 1 3 0M11 4h4l-1 3z" fill="#c4c2e4" stroke="#977"/><path d="M9 24c4-3 8-3 12 0l-2 4h-8z" fill="#fff" stroke="#bfc9cf"/></svg>
    </div>
</body>
</html>
```
FILE: styles.css
```css
/* Global Styles */
* {
    box-sizing: border-box;
    margin: 0;
    padding: 0;
}
body {
    display: flex;
    flex-direction: column;
    min-height: 100vh;
    position: relative;
    overflow: hidden;
    background-color: #bccde6;
    border-top: 2px solid #50557c;
    color: #34466a;
    font-family: "Noto Sans", "Noto Sans CJK SC", sans-serif;
    font-size: 7px;
    line-height: 10px;
}
button {
    border: none;
    background: none;
    color: inherit;
    font: inherit;
    white-space: nowrap;
}
a {
    color: inherit;
    text-decoration: none;
}
h1, h2 {
    font-size: inherit;
    font-weight: normal;
}
svg {
    display: block;
}
.sprite {
    position: absolute;
    width: 0;
    height: 0;
}
.icon-small {
    width: 10px;
    height: 10px;
}
.icon-win {
    width: 8px;
    height: 8px;
}
.icon-tab {
    width: 9px;
    height: 9px;
}
.divider {
    width: 1px;
    height: 10px;
    background-color: #b8c5d7;
}
.caret {
    width: 3px;
    border: 1px solid transparent;
    border-top-color: #52627e;
}
.caret.light {
    border-top-color: #fff;
}

/* Title bar */
.title-bar {
    display: grid;
    grid-template-columns: 6fr auto 5fr;
    align-items: center;
    height: 22px;
    background: linear-gradient(#fff, #fafafa);
}
.quick-access {
    display: flex;
    align-items: center;
    gap: 2px;
}
.quick-access button {
    padding: 0 0 0 1px;
}
.quick-access .divider:first-of-type {
    margin: 0 2px;
}
.title-bar h1 {
    color: #333;
    font-size: 7px;
}
.window-buttons {
    display: flex;
    justify-content: flex-end;
    gap: 17px;
    padding: 0 13px 4px 0;
}

/* Ribbon tabs */
.ribbon-tabs {
    display: flex;
    align-items: stretch;
    gap: 1px;
    height: 15px;
    background: linear-gradient(#fafafa, #efefef);
    border-bottom: 1px solid #bfc8d3;
}
.app-button {
    display: flex;
    align-items: center;
    justify-content: center;
    gap: 3px;
    width: 30px;
    background: linear-gradient(#3e80cf, #1764b8);
}
.tab {
    min-width: 29px;
    padding: 2px 7px;
    text-align: center;
}
.tab.active {
    background-color: #f2f8ff;
    border: 1px solid #bccbdc;
    border-bottom: none;
    padding: 1px 6px;
}
.tab-tools {
    display: flex;
    align-items: center;
    gap: 2px;
    margin-left: auto;
    padding-right: 3px;
}
.tab-tools button {
    display: flex;
    align-items: center;
    gap: 2px;
}

/* Ribbon */
.ribbon {
    display: flex;
    height: 56px;
    background: linear-gradient(#eaf4fd, #dbe7f4 60%, #cfe0f0);
    border-bottom: 1px solid #a9bad0;
}
.ribbon-group {
    display: flex;
    flex-direction: column;
    padding: 4px 1px 0 3px;
    border-right: 1px solid #bfcddd;
}
.ribbon-group.file-group {
    padding: 4px 3px 0 4px;
}
.ribbon-items {
    display: flex;
    flex: 1;
}
.ribbon-group h2 {
    height: 13px;
    text-align: center;
    color: #4a607f;
}
.tool {
    display: flex;
    flex-direction: column;
    align-items: center;
    gap: 1px;
    min-width: 24px;
    padding: 0 1px;
}
.file-group .tool {
    padding: 0;
}
.tool svg {
    width: 18px;
    height: 18px;
}
.tool.drop::after {
    content: "";
    width: 3px;
    border: 1px solid transparent;
    border-top-color: #52627e;
}
.ribbon-line {
    width: 1px;
    height: 34px;
    margin: 0 1px;
    background-color: #bdccdd;
}
.ribbon-gap {
    width: 4px;
}

/* Selection toolbars */
.toolbars {
    display: flex;
    flex-direction: column;
    height: 35px;
    padding-top: 1px;
}
.toolbar-row {
    display: flex;
    gap: 2px;
}
.toolbar {
    display: flex;
    align-items: center;
    height: 16px;
    padding-right: 2px;
    background: linear-gradient(#f6fafe, #dce7f3);
}
.grip {
    width: 2px;
    height: 12px;
    margin: 0 2px;
    border-left: 1px dotted #8fa3bd;
}
.toolbar svg {
    width: 12px;
    height: 12px;
    margin: 0 auto;
}
.snap-buttons {
    display: grid;
    grid-template-columns: repeat(12, 1fr);
    width: 176px;
}
.toolbar button {
    height: 15px;
}
.toolbar .on {
    background-color: #fbd96c;
    border: 1px solid #e6b54d;
}
.toolbar .mode {
    width: 14px;
    font-size: 5px;
    color: #293774;
    display: flex;
    justify-content: center;
    align-items: center;
}
.curve-buttons {
    display: grid;
    grid-template-columns: repeat(6, 1fr);
    width: 90px;
}
.toolbar.env {
    height: 17px;
    padding: 0;
}
.env button {
    min-width: 23px;
}
.env-end {
    align-self: stretch;
    width: 5px;
    margin-left: 2px;
    background-color: #9eb2cb;
}

/* Work area */
.workspace {
    flex: 1;
    display: grid;
    grid-template-columns: 3fr 8fr;
    gap: 8px;
    padding-right: 2px;
}
.side-panel {
    display: flex;
    flex-direction: column;
    min-width: 0;
    background-color: #d2deed;
}
.panel-header {
    display: flex;
    align-items: center;
    gap: 3px;
    height: 12px;
    padding: 0 2px;
    background: linear-gradient(#bccce2, #acc0dc);
    border-top: 1px solid #9dafca;
}
.panel-header h2 {
    flex: 1;
}
.panel-tools {
    display: flex;
    align-items: center;
    gap: 1px;
    height: 18px;
    padding: 0 2px;
    background: linear-gradient(#d7e2f0, #c5d4e8);
}
.panel-tools svg {
    width: 10px;
    height: 10px;
    margin: 0 auto;
}
.panel-tools button {
    width: 12px;
    height: 13px;
    color: #222;
    font-weight: bold;
}
.panel-tools .divider {
    margin: 0 1px;
}
.panel-tools .pressed {
    background-color: #f5f8fc;
}
.panel-tools .yellow {
    color: #d4bd18;
    background-color: #fff7ac;
}
.tree {
    flex: 1;
    margin: 0 2px;
    border-top: 1px solid #6e7e92;
    border-left: 1px solid #7989a0;
    background-color: #fff;
    color: #222;
}
.tree-row {
    display: flex;
    align-items: center;
    gap: 7px;
    height: 9px;
}
.tree-row.child {
    gap: 2px;
    padding-left: 7px;
}
.tree-root {
    width: 10px;
    height: 10px;
}
.branch {
    width: 8px;
    height: 6px;
    border-left: 1px dotted #999;
    border-bottom: 1px dotted #999;
}
.tree-row input {
    appearance: none;
    width: 7px;
    height: 7px;
    background-color: #fff;
}
.tree-row input:checked::before {
    content: "✓";
    display: block;
    color: #111;
    font-family: "DejaVu Sans", sans-serif;
    font-size: 8px;
    font-weight: bold;
    line-height: 7px;
}
.gear {
    width: 9px;
    height: 9px;
    color: #e58ba5;
}
.tree-row label {
    padding-left: 6px;
    color: #b51770;
    font-family: "Liberation Sans", sans-serif;
    font-weight: bold;
}
.tree-scroll {
    height: 11px;
    margin: 0 2px;
    border-top: 1px solid #7f8d9d;
    border-left: 1px solid #7f8d9d;
    background-color: #cbd9eb;
}
.panel-tabs,
.document-tabs {
    display: flex;
    height: 15px;
    gap: 2px;
    padding: 1px 2px 2px;
    background-color: #bfcfe7;
    border-top: 1px solid #8094ae;
}
.panel-tabs a {
    padding: 1px 2px;
}
.panel-tabs .active {
    background-color: #fff;
}
.document {
    display: flex;
    flex-direction: column;
    min-width: 0;
}
.viewport {
    flex: 1;
    display: flex;
    flex-direction: column;
    position: relative;
    border-top: 1px solid #657e99;
    border-left: 1px solid #657e99;
    background: linear-gradient(#0078cc 45%, #ababab);
}
.view-tools {
    display: flex;
    justify-content: center;
    padding-top: 5px;
}
.view-group {
    display: grid;
}
.view-group button {
    display: flex;
    justify-content: center;
}
.view-tools svg {
    width: 12px;
    height: 12px;
    background-color: #c8e3f5;
}
.nav-group {
    grid-template-columns: repeat(5, 1fr);
    width: 73px;
}
.section-button {
    display: flex;
    align-items: center;
    gap: 1px;
    margin: 0 4px;
    padding: 0 2px;
    background-color: #c8e3f5;
}
.display-group {
    grid-template-columns: repeat(14, 1fr);
    width: 206px;
}
.scene {
    flex: 1;
    display: flex;
    justify-content: center;
    align-items: center;
}
.model {
    width: 256px;
    height: 240px;
}
.axis-text {
    font-family: "Liberation Serif", serif;
    font-size: 8px;
    font-weight: bold;
}
.triad {
    position: absolute;
    left: 19px;
    bottom: 22px;
    width: 30px;
    height: 26px;
}
.document-tabs a {
    padding: 1px 2px;
    background-color: #fff;
    color: #26334f;
    font-weight: bold;
}

/* Command and status */
.command-row {
    height: 15px;
    padding: 1px 0 1px 26%;
    background: linear-gradient(#f1f6fc, #dae7f4);
}
.command-row input {
    display: block;
    width: 100%;
    height: 13px;
    padding: 0 3px;
    border: 1px solid #7a8289;
    background-color: #f1f2eb;
    font: inherit;
}
.status-bar {
    height: 13px;
    padding: 1px 2px;
    border-top: 1px solid #a9bbcf;
    background: linear-gradient(#d5e1ef, #b8cbe1);
}

/* Desktop widgets */
.watermark {
    position: absolute;
    right: 36px;
    bottom: 29px;
    display: flex;
    align-items: center;
    gap: 6px;
    color: #fff;
    font-size: 26px;
    font-weight: 400;
    line-height: 40px;
    text-shadow: 1px 1px 1px #555;
}
.watermark svg {
    width: 44px;
    height: 40px;
}
.speed-widget {
    position: absolute;
    right: 16px;
    bottom: 34px;
    width: 68px;
    height: 11px;
    border-radius: 6px;
    background-color: #353d4d;
    color: #fff;
    text-align: right;
    padding-right: 4px;
}
.speed-widget::before {
    content: "";
    position: absolute;
    left: -1px;
    top: -4px;
    width: 36px;
    height: 32px;
    border: 3px solid #60697a;
    border-radius: 50%;
    background-color: #3a4354;
}
.ime {
    position: absolute;
    right: 0;
    bottom: 0;
    width: 128px;
    height: 36px;
}
.ime-tip {
    position: absolute;
    right: 2px;
    top: 1px;
    width: 74px;
    height: 15px;
    display: flex;
    align-items: center;
    justify-content: space-between;
    padding: 0 2px 0 7px;
    background-color: #fff;
    color: #333;
}
.ime-emotes {
    position: absolute;
    left: 31px;
    top: 10px;
    display: flex;
    gap: 2px;
}
.ime-emotes span {
    width: 8px;
    height: 8px;
    border-radius: 50%;
    background: radial-gradient(#ffe49b, #e68a31);
}
.ime-bar {
    position: absolute;
    right: 0;
    bottom: 0;
    width: 112px;
    height: 15px;
    display: flex;
    align-items: center;
    justify-content: space-between;
    padding: 0 2px 0 16px;
    background-color: #fff;
    color: #277bd1;
    font-weight: bold;
}
.ime-bar svg {
    width: 9px;
    height: 9px;
}
.mascot {
    position: absolute;
    left: 0;
    bottom: 0;
    width: 30px;
    height: 30px;
}
```
